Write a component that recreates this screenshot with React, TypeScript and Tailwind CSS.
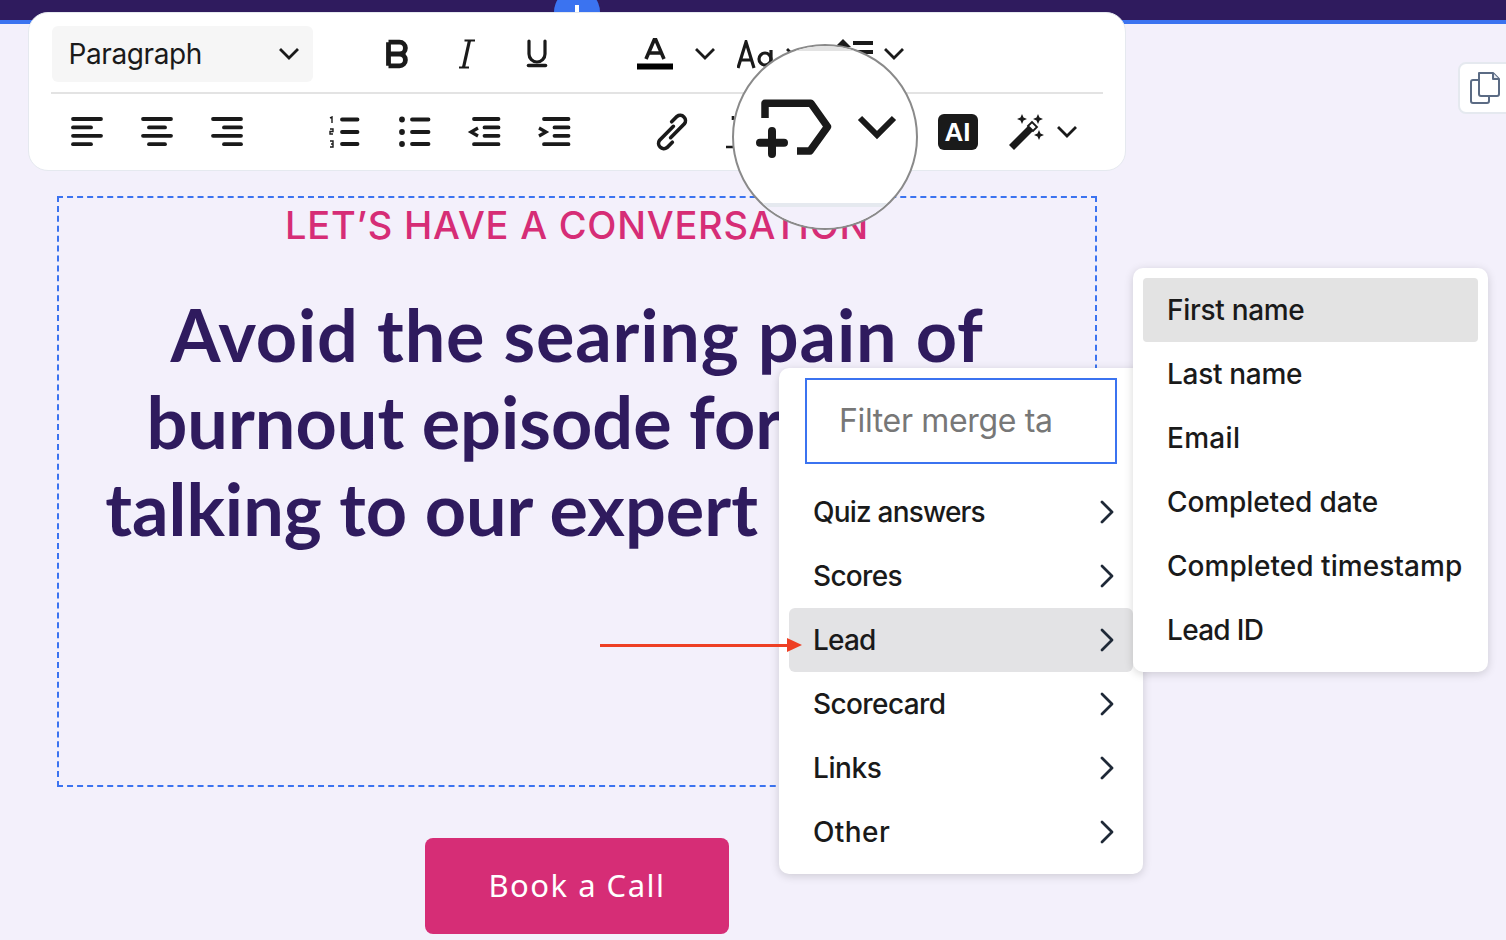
import React from "react";

const ink = "#1a1a1a";

function Chevron({ w = 22, h = 14, sw = 2.8, cls = "" }: { w?: number; h?: number; sw?: number; cls?: string }) {
  return (
    <svg width={w} height={h} viewBox="0 0 22 14" className={cls} fill="none" stroke={ink} strokeWidth={sw} strokeLinecap="square">
      <path d="M3 3l8 8 8-8" />
    </svg>
  );
}

function Lines({ rows }: { rows: [number, number][] }) {
  const ys = [3, 11.4, 19.8, 28.2];
  return (
    <svg width="32" height="32" viewBox="0 0 32 32" fill="none" stroke={ink} strokeWidth="3.8" strokeLinecap="round">
      {rows.map(([a, b], i) => (
        <path key={i} d={`M${a} ${ys[i]}H${b}`} />
      ))}
    </svg>
  );
}

function ListNum() {
  return (
    <svg width="32" height="32" viewBox="0 0 32 32" fill="none" stroke={ink} strokeLinecap="round">
      <path d="M14 3.5H29.5M14 16H29.5M14 28H29.5" strokeWidth="3.8" />
      <path d="M2 2l2-1v6M2 13h3v2.5H2V18h3M2 25h3v3H3h2v3H2" strokeWidth="1.4" strokeLinecap="butt" />
    </svg>
  );
}

function ListDot() {
  return (
    <svg width="32" height="32" viewBox="0 0 32 32" fill="none" stroke={ink} strokeLinecap="round">
      <path d="M13 3.5H29.5M13 16H29.5M13 28H29.5" strokeWidth="3.8" />
      <g fill={ink} stroke="none">
        <circle cx="3" cy="3.5" r="2.9" />
        <circle cx="3" cy="16" r="2.9" />
        <circle cx="3" cy="28" r="2.9" />
      </g>
    </svg>
  );
}

function Indent({ flip }: { flip?: boolean }) {
  return (
    <svg width="32" height="32" viewBox="0 0 32 32" fill="none" stroke={ink} strokeLinecap="round" className="overflow-visible">
      <path d="M5 3H29.5M15.5 11.4H29.5M15.5 19.8H29.5M5 28.2H29.5" strokeWidth="3.8" />
      {flip ? (
        <path d="M0 12l7 4-7 4" strokeWidth="3.2" strokeLinecap="butt" />
      ) : (
        <path d="M9 12l-7 4 7 4" strokeWidth="3.2" strokeLinecap="butt" />
      )}
    </svg>
  );
}

function RightChevron() {
  return (
    <svg width="14" height="24" viewBox="0 0 14 24" fill="none" stroke="#1f2937" strokeWidth="2.8" strokeLinecap="round" strokeLinejoin="round">
      <path d="M2 2l10 10L2 22" />
    </svg>
  );
}

function Row({ label, tr, active }: { label: string; tr: string; active?: boolean }) {
  return (
    <div className={`mx-[10px] flex h-[64px] items-center justify-between rounded-[6px] pl-[24px] pr-[19px] ${active ? "bg-[#e3e3e5]" : ""}`}>
      <span className={tr}>{label}</span>
      <RightChevron />
    </div>
  );
}

function SubRow({ label, tr, active }: { label: string; tr: string; active?: boolean }) {
  return (
    <div className={`flex h-[64px] items-center rounded-[4px] pl-[24px] ${active ? "bg-[#e3e3e3]" : ""}`}>
      <span className={tr}>{label}</span>
    </div>
  );
}

export default function App() {
  return (
    <div className="relative h-[940px] w-[1506px] overflow-hidden bg-[#f3f0fb] font-['Inter',sans-serif]">
      {/* top bar */}
      <div className="h-[24px] border-b-[4px] border-[#3b73f0] bg-[#2f1b5e]" />
      <div className="absolute left-[554px] top-[-11px] flex h-[46px] w-[46px] justify-center rounded-full bg-[#3b73f0]">
        <div className="mt-[16px] h-[20px] w-[4px] bg-white" />
      </div>

      {/* toolbar */}
      <div className="relative z-10 ml-[28px] mt-[-12px] h-[159px] w-[1098px] rounded-[20px] border-[1.5px] border-[#e5e9ef] bg-white">
        <div className="ml-[22.5px] mt-[12.5px] flex h-[56px] items-center">
          <div className="flex h-[56px] w-[261px] items-center justify-between rounded-[6px] bg-[#f6f6f6] pl-[17px] pr-[13px] text-[28px] tracking-[-0.4px] text-[#1a1a1a]">
            <span>Paragraph</span>
            <Chevron />
          </div>
          <div className="ml-[49px] flex w-[70px] justify-center">
            <svg width="26" height="30" viewBox="0 0 26 30" fill="none" stroke={ink} strokeWidth="4.8">
              <path d="M4.5 3.2V26.8M4.5 3.2H15.5a5.9 5.9 0 0 1 0 11.8H4.5M15.5 15a5.9 5.9 0 0 1 0 11.8H4.5" />
            </svg>
          </div>
          <div className="flex w-[70px] justify-center">
            <svg width="18" height="30" viewBox="0 0 18 30" fill="none" stroke={ink}>
              <path d="M11.5 1.5L5.5 28.5" strokeWidth="3.2" />
              <path d="M6.5 1.5H17M1 28.5H11" strokeWidth="1.8" />
            </svg>
          </div>
          <div className="flex w-[70px] justify-center">
            <svg width="22" height="30" viewBox="0 0 22 30" fill="none" stroke={ink} strokeLinecap="round">
              <path d="M3 2V15a8 8 0 0 0 16 0V2" strokeWidth="3.2" />
              <path d="M2.5 26.5H19.5" strokeWidth="3.6" />
            </svg>
          </div>
          <div className="ml-[65px] w-[36px]">
            <svg width="36" height="32" viewBox="0 0 36 32" fill="none" stroke={ink}>
              <path d="M9 21L18 0l9 21M11.5 15H24.5" strokeWidth="3.6" />
              <path d="M0 28.5H36" strokeWidth="6" stroke="#000" />
            </svg>
          </div>
          <Chevron cls="ml-[21px]" />
          <svg width="36" height="30" viewBox="0 0 36 30" fill="none" stroke={ink} strokeWidth="3.2" className="ml-[21px] mt-[2px]">
            <path d="M1 28L9 2l8 26M4 20H14" />
            <circle cx="28" cy="19" r="6" />
            <path d="M34 10V30" />
          </svg>
          <Chevron cls="ml-[12px]" />
          <svg width="40" height="30" viewBox="0 0 40 30" fill={ink} className="ml-[28px]">
            <path d="M8 0l8 8H10v14h6l-8 8-8-8h6V8H0z" />
            <path d="M18 2h20v4H18zM18 11h20v4H18zM18 20h20v4H18z" />
          </svg>
          <Chevron cls="ml-[8px]" />
        </div>
        <div className="ml-[21.5px] mt-[10px] h-[2px] w-[1052px] bg-[#e3e3e3]" />
        <div className="ml-[41.5px] mt-[22px] flex h-[32px] items-center">
          <Lines rows={[[2, 30], [2, 20], [2, 30], [2, 20]]} />
          <div className="ml-[38px]"><Lines rows={[[2, 30], [8, 24], [2, 30], [8, 24]]} /></div>
          <div className="ml-[38px]"><Lines rows={[[2, 30], [13, 30], [2, 30], [13, 30]]} /></div>
          <div className="ml-[85px]"><ListNum /></div>
          <div className="ml-[39px]"><ListDot /></div>
          <div className="ml-[38px]"><Indent /></div>
          <div className="ml-[38px]"><Indent flip /></div>
          <svg width="36" height="36" viewBox="0 0 36 36" fill="none" stroke={ink} strokeWidth="3.6" strokeLinecap="round" className="ml-[83px] overflow-visible">
            <g transform="rotate(-45 18 18)">
              <path d="M13 21H32.5a5.3 5.3 0 0 0 0-10.5H25" />
              <path d="M23 15H3.5a5.3 5.3 0 0 0 0 10.5H11" />
            </g>
          </svg>
          <div className="ml-[36px] w-[36px]">
            <svg width="36" height="36" viewBox="0 0 36 36" fill="none" stroke={ink} strokeWidth="2.6">
              <path d="M7 2v4M0 33H7" />
            </svg>
          </div>
          <div className="ml-[176px] flex h-[36px] w-[40px] items-center justify-center rounded-[6px] bg-[#1a1a1a] text-[26px] font-semibold leading-none text-white font-['Liberation_Sans',sans-serif]">
            AI
          </div>
          <svg width="36" height="36" viewBox="0 0 36 36" className="ml-[31px]">
            <path d="M0 31L21 10l5 5L5 36z" fill={ink} />
            <path d="M19 12l4-4 5 5-4 4z" fill="#fff" stroke={ink} strokeWidth="1.8" />
            <path d="M13 0l1.5 3.5L18 5l-3.5 1.5L13 10l-1.5-3.5L8 5l3.5-1.5zM29 0l1.5 3.5L34 5l-3.5 1.5L29 10l-1.5-3.5L24 5l3.5-1.5zM30 16l1.5 3.5L35 21l-3.5 1.5L30 26l-1.5-3.5L25 21l3.5-1.5z" fill={ink} />
          </svg>
          <Chevron cls="ml-[11px]" />
        </div>
      </div>

      {/* canvas */}
      <div className="ml-[57px] mt-[25px] h-[591px] w-[1040px] border-2 border-dashed border-[#3b73f0] text-center">
        <div className="mt-[5px] text-[38px] font-[550] leading-[44px] tracking-[0.75px] text-[#d62d76]">LET’S HAVE A CONVERSATION</div>
        <h1 className="mt-[44px] text-[72px] font-bold leading-[87px] text-[#2f1b5e] font-['Lato',sans-serif]">
          <span className="tracking-[0.8px]">Avoid the searing pain of</span>
          <br />
          burnout episode for<span className="tracking-[-2px]"> free by</span>
          <br />
          talking to our expert<span className="tracking-[2px]"> coaches</span>
        </h1>
      </div>
      <div className="ml-[425px] mt-[51px] flex h-[96px] w-[304px] items-center justify-center rounded-[8px] bg-[#d62d76] pb-[2px] text-[31px] tracking-[1.5px] text-white font-['Noto_Sans',sans-serif]">
        Book a Call
      </div>

      {/* copy button */}
      <div className="absolute left-[1458px] top-[62px] flex h-[52px] w-[60px] items-center rounded-[8px] border-2 border-[#e5e9ef] bg-white pl-[10px]">
        <svg width="30" height="32" viewBox="0 0 30 32" fill="none" stroke="#5b6b84" strokeWidth="2" strokeLinejoin="round">
          <path d="M9 1h14l6 6v15a2 2 0 0 1-2 2H11a2 2 0 0 1-2-2z" />
          <path d="M23 1v6h6" fill="#e5e9ef" />
          <path d="M9 8H3a2 2 0 0 0-2 2v19a2 2 0 0 0 2 2h14a2 2 0 0 0 2-2v-5" />
        </svg>
      </div>

      {/* magnifier */}
      <div className="absolute left-[732px] top-[44px] z-20 flex h-[186px] w-[186px] flex-col overflow-hidden rounded-full border-[2.5px] border-[#8a8a8a] bg-white">
        <div className="h-[5px] bg-[#e3e3e3]" />
        <div className="flex-1">
          <svg width="150" height="62" viewBox="0 0 150 62" fill="none" stroke={ink} className="ml-[22px] mt-[47px]">
            <path d="M9 20V5.3H55L71.5 28.7 54 53H41" strokeWidth="7.5" strokeLinejoin="round" />
            <path d="M4 44.7H28M16 33V56" strokeWidth="8" strokeLinecap="round" />
            <path d="M104 20l17 17 17-17" strokeWidth="6" />
          </svg>
        </div>
        <div className="h-[4px] bg-[#e5e9ef]" />
        <div className="h-[21px] bg-[#f3f0fb]" />
      </div>

      {/* arrow */}
      <div className="absolute left-[600px] top-[637px] z-30 flex h-[16px] items-center">
        <div className="h-[3px] w-[187px] bg-[#ee3f24]" />
        <svg width="15" height="16" viewBox="0 0 15 16"><path d="M0 1l15 7-15 7z" fill="#ee3f24" /></svg>
      </div>

      {/* merge menu */}
      <div className="absolute left-[779px] top-[368px] z-10 h-[506px] w-[364px] rounded-[10px] bg-white pt-[10px] text-[28px] font-medium text-[#1a1a1a] shadow-[0_2px_10px_rgba(0,0,0,0.16)]">
        <div className="ml-[26px] flex h-[86px] w-[312px] items-center border-2 border-[#3b73f0] pl-[32px] text-[32px] font-normal tracking-[-0.35px] text-[#777777]">Filter merge ta</div>
        <div className="mt-[16px]">
          <Row label="Quiz answers" tr="tracking-[-0.8px]" />
          <Row label="Scores" tr="tracking-[-0.7px]" />
          <Row label="Lead" tr="tracking-[-0.8px]" active />
          <Row label="Scorecard" tr="tracking-[-0.6px]" />
          <Row label="Links" tr="tracking-[-0.4px]" />
          <Row label="Other" tr="tracking-[0.4px]" />
        </div>
      </div>

      {/* submenu */}
      <div className="absolute left-[1133px] top-[268px] z-10 h-[404px] w-[355px] rounded-[10px] bg-white p-[10px] text-[28px] font-medium text-[#1a1a1a] shadow-[0_2px_10px_rgba(0,0,0,0.16)]">
        <SubRow label="First name" tr="tracking-[-0.3px]" active />
        <SubRow label="Last name" tr="tracking-[-0.3px]" />
        <SubRow label="Email" tr="tracking-[0.3px]" />
        <SubRow label="Completed date" tr="tracking-[-0.1px]" />
        <SubRow label="Completed timestamp" tr="tracking-[0.05px]" />
        <SubRow label="Lead ID" tr="tracking-[-0.7px]" />
      </div>
    </div>
  );
}
